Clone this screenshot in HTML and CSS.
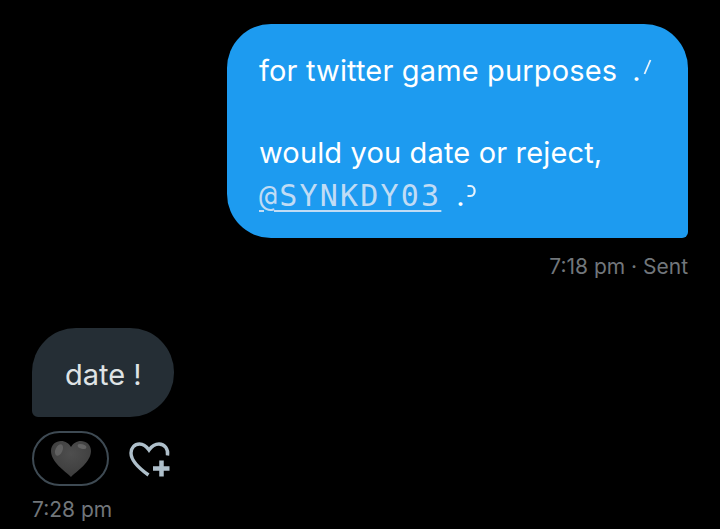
FILE: index.html
```html
<!DOCTYPE html>
<html lang="en">
<head>
    <meta charset="UTF-8">
    <meta name="viewport" content="width=device-width, initial-scale=1.0">
    <title>Direct message</title>
    <link rel="stylesheet" href="styles.css">
</head>
<body>
    <div class="thread">
        <div class="message sent">
            <div class="bubble bubble-sent">
                <p class="line">for twitter game purposes<span class="mark">.<svg class="tick" width="10" height="18" viewBox="0 0 10 18"><path d="M8.500 1 L2.500 15" fill="none" stroke="#e6f2fc" stroke-width="1.800"/></svg></span></p>
                <p class="line line-gap">would you date or reject,</p>
                <p class="line line-mention"><a class="mention" href="#">@SYNKDY03</a><span class="mark mark-q">.<svg class="tick" width="12" height="18" viewBox="0 0 12 18"><path d="M1.500 2 H4.500 C10 2 10 12 4.500 12 H1.500" fill="none" stroke="#e6f2fc" stroke-width="2.200"/></svg></span></p>
            </div>
            <div class="meta">7:18 pm · Sent</div>
        </div>

        <div class="message received">
            <div class="bubble bubble-received">date !</div>
            <div class="reactions">
                <div class="reaction-pill">
                    <svg width="42" height="38" viewBox="0 0 42 38">
                        <defs>
                            <radialGradient id="heartFill" cx="0.5" cy="0.35" r="0.75">
                                <stop offset="0" stop-color="#4e4e4e"/>
                                <stop offset="1" stop-color="#3a3a3a"/>
                            </radialGradient>
                        </defs>
                        <path d="M21 37 C15 31 1 22 1 11 C1 4.500 6 1 11 1 C15.500 1 19 3.500 21 7 C23 3.500 26.500 1 31 1 C36 1 41 4.500 41 11 C41 22 27 31 21 37 Z" fill="url(#heartFill)"/>
                        <ellipse cx="9" cy="10" rx="3.500" ry="6" transform="rotate(25 9 10)" fill="#6a6a6a" opacity="0.75"/>
                        <ellipse cx="32" cy="6.500" rx="4.500" ry="2.200" transform="rotate(15 32 6.500)" fill="#6a6a6a" opacity="0.8"/>
                    </svg>
                </div>
                <svg class="add-reaction" width="42" height="38" viewBox="0 0 42 38">
                    <path d="M38.500 15.500 C39.500 9 35.500 4 30 4 C26 4 22.500 6.500 20 10 C17.500 6.500 14 4 10.500 4 C5.500 4 2 8 2 13 C2 21 11 29 19.500 35" fill="none" stroke="#aebfca" stroke-width="3.400"/>
                    <path d="M32.500 20.500 V36.500 M24 28.500 H40.500" fill="none" stroke="#aebfca" stroke-width="4.500"/>
                </svg>
            </div>
            <div class="meta">7:28 pm</div>
        </div>
    </div>
</body>
</html>
```

FILE: styles.css
```css
body {
    margin: 0;
    background-color: #000;
    font-family: Inter, Roboto, sans-serif;
    overflow: hidden;
}
.thread {
    display: flex;
    flex-direction: column;
    padding: 24px 32px 0;
    height: 529px;
    box-sizing: border-box;
}
.message {
    display: flex;
    flex-direction: column;
}
.sent {
    align-items: flex-end;
}
.received {
    align-items: flex-start;
    margin-top: 48px;
}
.bubble {
    font-size: 29px;
    line-height: 44px;
}
.bubble-sent {
    width: 461px;
    height: 214px;
    box-sizing: border-box;
    padding: 25px 32px 0;
    background-color: #1d9bf0;
    color: #fff;
    letter-spacing: 0.150px;
    border-radius: 44px 44px 6px 44px;
}
.bubble-received {
    padding: 25px 0 20px 33px;
    width: 142px;
    box-sizing: border-box;
    white-space: nowrap;
    background-color: #252e35;
    color: #dfe3e5;
    border-radius: 44px 44px 44px 6px;
}
.line {
    margin: 0;
    display: flex;
    align-items: baseline;
}
.line-gap {
    margin-top: 38px;
}
.line-mention {
    margin-top: -1px;
}
.mention {
    color: #c0dcf5;
    font-family: "DejaVu Sans Mono", monospace;
    font-size: 30px;
    letter-spacing: 2.200px;
    text-decoration: underline;
    text-underline-offset: 4px;
    text-decoration-thickness: 2px;
}
.mark {
    margin-left: 15px;
    display: inline-flex;
    align-items: flex-start;
}
.tick {
    margin-left: 1px;
    margin-top: 10px;
}
.meta {
    font-size: 21px;
    line-height: 26px;
    color: #71767b;
}
.sent .meta {
    margin-top: 16px;
}
.reactions {
    display: flex;
    align-items: center;
    gap: 20px;
    margin-top: 14px;
}
.reaction-pill {
    width: 77px;
    height: 55px;
    box-sizing: border-box;
    display: flex;
    align-items: center;
    justify-content: center;
    border: 2px solid #3e4a53;
    border-radius: 28px;
}
.received .meta {
    margin-top: 11px;
}
```
